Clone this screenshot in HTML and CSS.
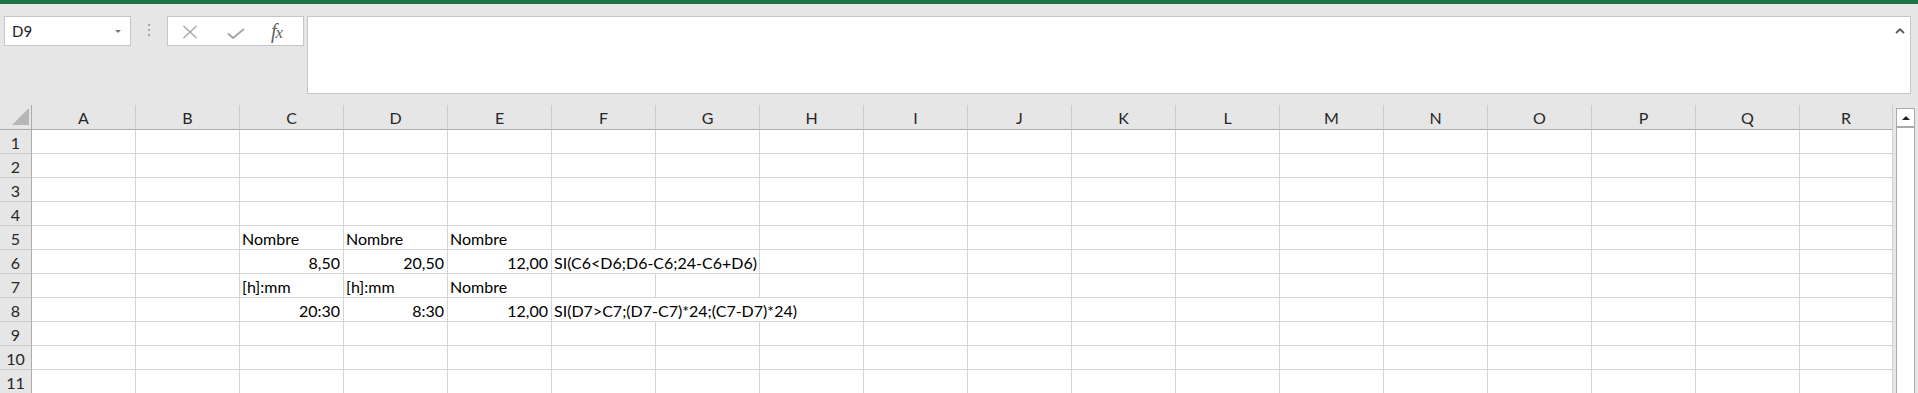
FILE: index.html
```
<!DOCTYPE html>
<html lang="fr">
<head>
<meta charset="utf-8">
<title>Feuille</title>
<link rel="stylesheet" href="styles.css">
</head>
<body>
<div class="app">
  <div class="titlebar"></div>
  <div class="toolbar">
    <div class="namebox"><span class="namebox-text">D9</span><span class="namebox-arrow"></span></div>
    <div class="grip"><span></span><span></span><span></span></div>
    <div class="fxbox">
      <svg class="ico-cancel" width="16" height="14" viewBox="0 0 16 14"><path d="M1.5 1 L14.5 13 M14.5 1 L1.5 13" stroke="#a6a6a6" stroke-width="1.4" fill="none"/></svg>
      <svg class="ico-enter" width="18" height="11" viewBox="0 0 18 11"><path d="M1 5.5 L6 10 L17 1" stroke="#a6a6a6" stroke-width="2" fill="none"/></svg>
      <span class="fx"><i>f</i><i class="fx-x">x</i></span>
    </div>
    <div class="formula">
      <svg class="ico-collapse" width="10" height="6" viewBox="0 0 10 6"><path d="M1 5 L5 1.3 L9 5" stroke="#595959" stroke-width="1.8" fill="none"/></svg>
    </div>
  </div>
  <div class="sheet">
    <div class="grid">
      <div class="corner"><span class="corner-tri"></span></div>
      <div class="ch">A</div><div class="ch">B</div><div class="ch">C</div><div class="ch">D</div><div class="ch">E</div><div class="ch">F</div><div class="ch">G</div><div class="ch">H</div><div class="ch">I</div><div class="ch">J</div><div class="ch">K</div><div class="ch">L</div><div class="ch">M</div><div class="ch">N</div><div class="ch">O</div><div class="ch">P</div><div class="ch">Q</div><div class="ch">R</div>

      <div class="rh">1</div><div class="c"></div><div class="c"></div><div class="c"></div><div class="c"></div><div class="c"></div><div class="c"></div><div class="c"></div><div class="c"></div><div class="c"></div><div class="c"></div><div class="c"></div><div class="c"></div><div class="c"></div><div class="c"></div><div class="c"></div><div class="c"></div><div class="c"></div><div class="c"></div>

      <div class="rh">2</div><div class="c"></div><div class="c"></div><div class="c"></div><div class="c"></div><div class="c"></div><div class="c"></div><div class="c"></div><div class="c"></div><div class="c"></div><div class="c"></div><div class="c"></div><div class="c"></div><div class="c"></div><div class="c"></div><div class="c"></div><div class="c"></div><div class="c"></div><div class="c"></div>

      <div class="rh">3</div><div class="c"></div><div class="c"></div><div class="c"></div><div class="c"></div><div class="c"></div><div class="c"></div><div class="c"></div><div class="c"></div><div class="c"></div><div class="c"></div><div class="c"></div><div class="c"></div><div class="c"></div><div class="c"></div><div class="c"></div><div class="c"></div><div class="c"></div><div class="c"></div>

      <div class="rh">4</div><div class="c"></div><div class="c"></div><div class="c"></div><div class="c"></div><div class="c"></div><div class="c"></div><div class="c"></div><div class="c"></div><div class="c"></div><div class="c"></div><div class="c"></div><div class="c"></div><div class="c"></div><div class="c"></div><div class="c"></div><div class="c"></div><div class="c"></div><div class="c"></div>

      <div class="rh">5</div><div class="c"></div><div class="c"></div><div class="c">Nombre</div><div class="c">Nombre</div><div class="c">Nombre</div><div class="c"></div><div class="c"></div><div class="c"></div><div class="c"></div><div class="c"></div><div class="c"></div><div class="c"></div><div class="c"></div><div class="c"></div><div class="c"></div><div class="c"></div><div class="c"></div><div class="c"></div>

      <div class="rh">6</div><div class="c"></div><div class="c"></div><div class="c num">8,50</div><div class="c num">20,50</div><div class="c num">12,00</div><div class="c span2">SI(C6&lt;D6;D6-C6;24-C6+D6)</div><div class="c"></div><div class="c"></div><div class="c"></div><div class="c"></div><div class="c"></div><div class="c"></div><div class="c"></div><div class="c"></div><div class="c"></div><div class="c"></div><div class="c"></div>

      <div class="rh">7</div><div class="c"></div><div class="c"></div><div class="c">[h]:mm</div><div class="c">[h]:mm</div><div class="c">Nombre</div><div class="c"></div><div class="c"></div><div class="c"></div><div class="c"></div><div class="c"></div><div class="c"></div><div class="c"></div><div class="c"></div><div class="c"></div><div class="c"></div><div class="c"></div><div class="c"></div><div class="c"></div>

      <div class="rh">8</div><div class="c"></div><div class="c"></div><div class="c num">20:30</div><div class="c num">8:30</div><div class="c num">12,00</div><div class="c span3">SI(D7&gt;C7;(D7-C7)*24;(C7-D7)*24)</div><div class="c"></div><div class="c"></div><div class="c"></div><div class="c"></div><div class="c"></div><div class="c"></div><div class="c"></div><div class="c"></div><div class="c"></div><div class="c"></div>

      <div class="rh">9</div><div class="c"></div><div class="c"></div><div class="c"></div><div class="c"></div><div class="c"></div><div class="c"></div><div class="c"></div><div class="c"></div><div class="c"></div><div class="c"></div><div class="c"></div><div class="c"></div><div class="c"></div><div class="c"></div><div class="c"></div><div class="c"></div><div class="c"></div><div class="c"></div>

      <div class="rh">10</div><div class="c"></div><div class="c"></div><div class="c"></div><div class="c"></div><div class="c"></div><div class="c"></div><div class="c"></div><div class="c"></div><div class="c"></div><div class="c"></div><div class="c"></div><div class="c"></div><div class="c"></div><div class="c"></div><div class="c"></div><div class="c"></div><div class="c"></div><div class="c"></div>

      <div class="rh">11</div><div class="c"></div><div class="c"></div><div class="c"></div><div class="c"></div><div class="c"></div><div class="c"></div><div class="c"></div><div class="c"></div><div class="c"></div><div class="c"></div><div class="c"></div><div class="c"></div><div class="c"></div><div class="c"></div><div class="c"></div><div class="c"></div><div class="c"></div><div class="c"></div>
    </div>
    <div class="vscroll">
      <div class="vscroll-up"><span class="up-tri"></span></div>
      <div class="vscroll-track"></div>
    </div>
  </div>
</div>
</body>
</html>
```
FILE: styles.css
```
html, body {
  margin: 0;
  padding: 0;
  background: #e6e6e6;
  overflow: hidden;
}
body {
  width: 1918px;
  height: 393px;
  font-family: "Lato", "Liberation Sans", sans-serif;
  font-size: 16px;
  color: #000;
}
.titlebar {
  height: 4px;
  background: #217346;
}
.toolbar {
  display: flex;
  align-items: flex-start;
  padding: 12px 7px 11px 4px;
}
.namebox {
  box-sizing: border-box;
  width: 127px;
  height: 30px;
  background: #fff;
  border: 1px solid #c6c6c6;
  display: flex;
  align-items: center;
  justify-content: space-between;
  padding: 0 9px 0 7px;
}
.namebox-text {
  font-size: 15px;
  color: #222;
}
.namebox-arrow {
  width: 0;
  height: 0;
  border-left: 3px solid transparent;
  border-right: 3px solid transparent;
  border-top: 3px solid #777;
}
.grip {
  width: 3px;
  margin: 8px 16px 0 17px;
  display: flex;
  flex-direction: column;
  gap: 3px;
}
.grip span {
  width: 2px;
  height: 2px;
  background: #a6a6a6;
}
.fxbox {
  box-sizing: border-box;
  width: 137px;
  height: 30px;
  background: #fff;
  border: 1px solid #c6c6c6;
  display: flex;
  align-items: center;
  padding-left: 14px;
}
.ico-cancel { margin-top: 2px; }
.ico-enter { margin-left: 29px; margin-top: 5px; }
.fx {
  margin-left: 26px;
  font-family: "Liberation Serif", serif;
  font-size: 20px;
  color: #5f5f5f;
  letter-spacing: -1px;
}
.fx-x { font-size: 17px; }
.formula {
  box-sizing: border-box;
  margin-left: 3px;
  width: 1604px;
  height: 78px;
  background: #fff;
  border: 1px solid #c6c6c6;
  display: flex;
  justify-content: flex-end;
  align-items: flex-start;
  padding: 11px 5px 0 0;
}
.sheet {
  display: flex;
  align-items: flex-start;
}
.grid {
  display: grid;
  grid-template-columns: 32px repeat(17, 104px) 93px;
  grid-template-rows: 25px;
  grid-auto-rows: 24px;
}
.grid > div {
  box-sizing: border-box;
  white-space: nowrap;
  overflow: hidden;
  line-height: 20px;
  padding-top: 3px;
}
.corner {
  background: #e6e6e6;
  border-right: 1px solid #ababab;
  border-bottom: 1px solid #ababab;
  position: relative;
}
.corner-tri {
  position: absolute;
  left: 12px;
  top: 3px;
  width: 0;
  height: 0;
  border-left: 17px solid transparent;
  border-bottom: 17px solid #b6b6b6;
}
.ch {
  background: #e6e6e6;
  border-right: 1px solid #cbcbcb;
  border-bottom: 1px solid #ababab;
  text-align: center;
  color: #262626;
}
.rh {
  background: #e6e6e6;
  border-right: 1px solid #ababab;
  border-bottom: 1px solid #cbcbcb;
  text-align: center;
  color: #262626;
}
.c {
  background: #fff;
  border-right: 1px solid #d4d4d4;
  border-bottom: 1px solid #d4d4d4;
  padding-left: 2px;
  padding-right: 3px;
}
.num { text-align: right; }
.span2 { grid-column: span 2; }
.span3 { grid-column: span 3; }
.vscroll {
  width: 25px;
  box-sizing: border-box;
  padding: 3px 3px 0 3px;
  display: flex;
  flex-direction: column;
}
.vscroll-up {
  box-sizing: border-box;
  height: 20px;
  background: #fff;
  border: 1px solid #ababab;
  border-bottom: 2px solid #ababab;
  display: flex;
  align-items: center;
  justify-content: center;
}
.up-tri {
  width: 0;
  height: 0;
  border-left: 4px solid transparent;
  border-right: 4px solid transparent;
  border-bottom: 4px solid #222;
}
.vscroll-track {
  box-sizing: border-box;
  height: 300px;
  background: #fff;
  border-left: 1px solid #ababab;
  border-right: 1px solid #ababab;
}
```
